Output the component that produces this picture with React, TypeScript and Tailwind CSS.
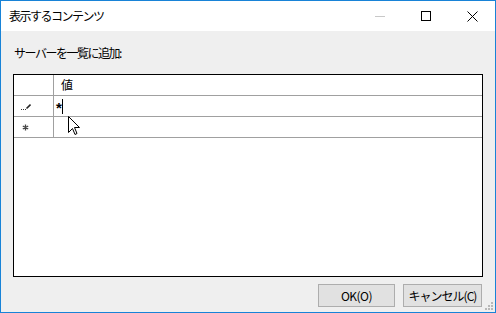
import React from "react"

const font = { fontFamily: '"Noto Sans CJK JP", "Noto Sans", sans-serif' }

const App = () => {
    return (
        <div className="w-[496px] h-[313px] border border-[#1883d7] bg-[#efefef] flex flex-col relative text-[#000]" style={font}>
            {/* title bar */}
            <div className="h-[30px] bg-white flex items-center shrink-0">
                <span className="pl-[8px] text-[12px] tracking-[-1.5px] text-[#000]">表示するコンテンツ</span>
                <div className="ml-auto flex h-full">
                    <div className="w-[46px] h-full flex items-center justify-center">
                        <div className="w-[10px] h-px bg-[#c8c8c8]" />
                    </div>
                    <div className="w-[46px] h-full flex items-center justify-center">
                        <div className="w-[10px] h-[10px] border border-black" />
                    </div>
                    <div className="w-[46px] h-full flex items-center justify-center">
                        <svg width="11" height="11" viewBox="0 0 11 11">
                            <path d="M0.5 0.5 L10.5 10.5 M10.5 0.5 L0.5 10.5" stroke="#000" strokeWidth="1" />
                        </svg>
                    </div>
                </div>
            </div>

            {/* body */}
            <div className="flex-1 flex flex-col px-[12px]">
                <div className="mt-[15px] h-[14px] leading-[14px] text-[12px] tracking-[-1.5px] pl-[1px]">サーバーを一覧に追加:</div>
                <div className="mt-[14px] h-[203px] border border-black bg-white flex flex-col">
                    <div className="flex h-[21px] border-b border-[#a0a0a0]">
                        <div className="w-[40px] border-r border-[#a0a0a0]" />
                        <div className="flex-1 pl-[7px] text-[12px] leading-[20px]">値</div>
                    </div>
                    <div className="flex h-[21px] border-b border-[#a0a0a0]">
                        <div className="w-[40px] border-r border-[#a0a0a0] flex items-center pl-[7px]">
                            <svg width="10" height="8" viewBox="0 0 10 8">
                                <rect x="0" y="7" width="1" height="1" fill="#333" />
                                <rect x="2" y="7" width="1" height="1" fill="#333" />
                                <rect x="4" y="7" width="1" height="1" fill="#333" />
                                <path d="M5.5 6.5 L9.5 2.5" stroke="#222" strokeWidth="1.6" />
                            </svg>
                        </div>
                        <div className="flex-1 pl-[2px] flex items-center">
                            <span className="font-['Liberation_Sans'] font-bold text-[15px] leading-[20px] pt-[3px]">*</span>
                            <span className="w-px h-[15px] bg-black" />
                        </div>
                    </div>
                    <div className="flex h-[21px] border-b border-[#a0a0a0]">
                        <div className="w-[40px] border-r border-[#a0a0a0] flex items-center pl-[8px]">
                            <svg width="7" height="7" viewBox="0 0 7 7">
                                <path d="M3.5 0.5 L3.5 6.5 M0.8 2 L6.2 5 M0.8 5 L6.2 2" stroke="#444" strokeWidth="1.3" />
                            </svg>
                        </div>
                        <div className="flex-1" />
                    </div>
                </div>
                <div className="mt-[7px] flex justify-end gap-[8px] pr-[1px]">
                    <button className="w-[77px] h-[23px] bg-[#e1e1e1] border border-[#adadad] text-[12px] tracking-[-0.5px] leading-[21px]">OK(O)</button>
                    <button className="w-[79px] h-[23px] bg-[#e1e1e1] border border-[#adadad] text-[12px] tracking-[-1px] leading-[21px]">キャンセル(C)</button>
                </div>
            </div>

            {/* resize grip */}
            <svg className="absolute right-[2px] bottom-[2px]" width="8" height="8" viewBox="0 0 8 8">
                <rect x="6" y="0" width="2" height="2" fill="#b8b8b8" />
                <rect x="3" y="3" width="2" height="2" fill="#b8b8b8" />
                <rect x="6" y="3" width="2" height="2" fill="#b8b8b8" />
                <rect x="0" y="6" width="2" height="2" fill="#b8b8b8" />
                <rect x="3" y="6" width="2" height="2" fill="#b8b8b8" />
                <rect x="6" y="6" width="2" height="2" fill="#b8b8b8" />
            </svg>

            {/* mouse pointer */}
            <svg className="absolute left-[67px] top-[115px]" width="13" height="20" viewBox="0 0 13 20">
                <path d="M0.5 0.5 L0.5 16.5 L4.5 12.5 L7 18.5 L9 17.5 L6.5 11.5 L11.5 11.5 Z" fill="#fff" stroke="#000" strokeWidth="1" strokeLinejoin="miter" />
            </svg>
        </div>
    )
}

export default App
